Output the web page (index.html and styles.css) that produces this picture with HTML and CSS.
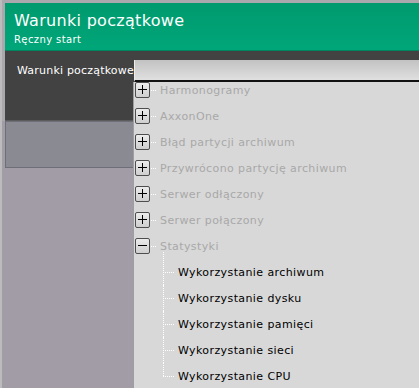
FILE: index.html
```html
<html>
<head>
    <meta charset="UTF-8">
    <title>Warunki początkowe</title>
    <link rel="stylesheet" href="styles.css">
</head>
<body>
<div class="app">
    <div class="top">
        <div class="header">
            <h1 class="title">Warunki początkowe</h1>
            <div class="subtitle">Ręczny start</div>
        </div>
        <div class="panel">
            <span class="label">Warunki początkowe</span>
            <div class="combo"></div>
        </div>
    </div>
    <div class="box"></div>

    <div class="dropdown">
        <ul class="tree">
            <li class="node"><span class="toggle plus"></span><span class="dots"></span><span class="name">Harmonogramy</span></li>
            <li class="node"><span class="toggle plus"></span><span class="dots"></span><span class="name">AxxonOne</span></li>
            <li class="node"><span class="toggle plus"></span><span class="dots"></span><span class="name">Błąd partycji archiwum</span></li>
            <li class="node"><span class="toggle plus"></span><span class="dots"></span><span class="name">Przywrócono partycję archiwum</span></li>
            <li class="node"><span class="toggle plus"></span><span class="dots"></span><span class="name">Serwer odłączony</span></li>
            <li class="node"><span class="toggle plus"></span><span class="dots"></span><span class="name">Serwer połączony</span></li>
            <li class="node"><span class="toggle"></span><span class="dots"></span><span class="name">Statystyki</span></li>
            <li class="children">
                <div class="leaf first"><span class="dots long"></span>Wykorzystanie archiwum</div>
                <div class="leaf"><span class="dots long"></span>Wykorzystanie dysku</div>
                <div class="leaf"><span class="dots long"></span>Wykorzystanie pamięci</div>
                <div class="leaf"><span class="dots long"></span>Wykorzystanie sieci</div>
                <div class="leaf last"><span class="dots long"></span>Wykorzystanie CPU</div>
            </li>
        </ul>
    </div>
</div>
</body>
</html>
```

FILE: styles.css
```css
* {
    padding: 0;
    margin: 0;
    box-sizing: border-box;
}

body {
    width: 419px;
    height: 388px;
    overflow: hidden;
    background: #a29ca6;
    font-family: "DejaVu Sans", Verdana, sans-serif;
}

.app {
    position: relative;
    height: 388px;
    border-left: 2px solid #bdbcbd;
}

.top {
    background: #aaa8ac;
    padding: 3px 0 0 3px;
}

.header {
    height: 48px;
    padding: 8px 0 0 9px;
    background: linear-gradient(#009a6e, #00a679);
    border-bottom: 1px solid #00865f;
    color: #fff;
}

.title {
    font-size: 16px;
    font-weight: normal;
    line-height: 20px;
    letter-spacing: 0.3px;
}

.subtitle {
    font-size: 10px;
    line-height: 13px;
    margin-top: 2px;
    letter-spacing: 0.4px;
}

.panel {
    height: 70px;
    background: #424242;
    border-bottom: 1px solid #5c5c5c;
    display: flex;
    align-items: flex-start;
    padding-top: 9px;
}

.label {
    color: #fff;
    font-size: 11px;
    line-height: 21px;
    margin-left: 12px;
    width: 117px;
    white-space: nowrap;
    letter-spacing: 0.2px;
}

.combo {
    flex: 1;
    height: 22px;
    background: linear-gradient(#c2c2c2, #e0e0e0);
    border-left: 1px solid #ececec;
    border-bottom: 2px solid #111;
}

.box {
    margin-left: 3px;
    height: 47px;
    background: #8a8b92;
    border: 1px solid #6d6e77;
}

.dropdown {
    position: absolute;
    left: 131px;
    top: 82px;
    width: 288px;
    bottom: 0;
    background: #d8d8d8;
    border-left: 1px solid #a09ca4;
    overflow: hidden;
}

.tree {
    list-style: none;
    margin-top: -5px;
}

.node {
    height: 26px;
    display: flex;
    align-items: center;
    padding-left: 1px;
    font-size: 11px;
    color: #a8a8a8;
    letter-spacing: 0.4px;
}

.toggle {
    position: relative;
    flex: none;
    width: 15px;
    height: 16px;
    border: 1px solid #4e4e4e;
    border-radius: 2px;
    background: linear-gradient(#ececec, #cfcfcf);
}

.toggle::before {
    content: "";
    position: absolute;
    left: 2px;
    top: 6px;
    width: 9px;
    height: 1px;
    background: #000;
}

.toggle.plus::after {
    content: "";
    position: absolute;
    left: 6px;
    top: 2px;
    width: 1px;
    height: 9px;
    background: #000;
}

.dots {
    width: 5px;
    border-top: 1px dotted #ffffff;
    margin: 0 4px 0 1px;
}

.children {
    margin-left: 29px;
}

.leaf {
    position: relative;
    height: 26px;
    display: flex;
    align-items: center;
    font-size: 11px;
    color: #000;
    letter-spacing: 0.4px;
}

.leaf::before {
    content: "";
    position: absolute;
    left: 0;
    top: 0;
    bottom: 0;
    border-left: 1px dotted #ffffff;
}

.leaf.first::before {
    top: -7px;
}

.leaf.last::before {
    bottom: 13px;
}

.dots.long {
    width: 11px;
    margin: 0 4px 0 0;
}
```
